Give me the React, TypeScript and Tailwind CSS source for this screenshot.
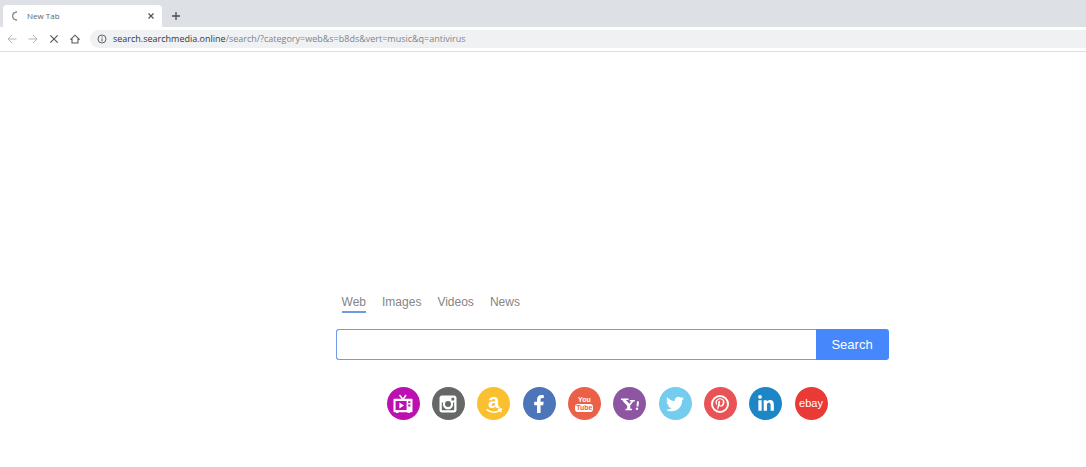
import type { ReactNode } from "react";
import { FaFacebookF, FaLinkedinIn, FaPinterestP, FaTwitter } from "react-icons/fa";

const tabs = ["Web", "Images", "Videos", "News"];

function TvIcon() {
  return <svg viewBox="0 0 20 20" className="size-5" fill="none" stroke="currentColor">
    <path d="M6.500 1 10 5.500 13 1" strokeWidth="1.500" />
    <path fill="currentColor" stroke="none" fillRule="evenodd" d="M1.500 4.800h17c.6 0 1 .4 1 1v11.400c0 .6-.4 1-1 1H17V19h-2.500v-.8h-9V19H3v-.8H1.500c-.6 0-1-.4-1-1V5.800c0-.6.4-1 1-1zM2.600 7v9h11V7zM15.200 7.200v1.800h2.200V7.200zM15.200 10.600v1.800h2.200v-1.800z" />
    <path d="m6.400 8.600 4.600 2.900-4.600 2.900z" fill="currentColor" stroke="none" />
  </svg>;
}

function InstagramIcon() {
  return <svg viewBox="0 0 20 20" className="size-5">
    <path fill="currentColor" fillRule="evenodd" d="M4 1.500h12c1.500 0 2.500 1 2.500 2.500v12c0 1.500-1 2.500-2.500 2.500H4c-1.500 0-2.500-1-2.500-2.500V4c0-1.500 1-2.500 2.500-2.500zM3.800 8.600v6.600c0 .7.400 1.100 1.100 1.100h10.200c.7 0 1.100-.4 1.100-1.100V8.600h-1.300a5.200 5.200 0 1 1-9.800 0zM13.500 3.800v2.700h2.700V3.800z" />
    <circle cx="10" cy="10" r="3" fill="#666867" />
  </svg>;
}

function YahooIcon() {
  return <svg viewBox="0 0 20 16" className="h-4 w-5" fill="none" stroke="currentColor">
    <path d="M1 3.300h7.500M9.800 4.800h5M5.500 13.400h6.500" strokeWidth="1.500" />
    <path d="m3.400 3.500 5.300 5.700v4" strokeWidth="3" />
    <path d="m12.800 5-3.500 4.200" strokeWidth="1.700" />
    <path d="m18 5.300-.5 5" strokeWidth="2" />
    <circle cx="17" cy="12.800" r="1.200" fill="currentColor" stroke="none" />
  </svg>;
}

function AmazonIcon() {
  return <span className="flex flex-col items-center font-['Liberation_Sans',sans-serif] text-[20px] font-bold leading-[14px]">
    <span>a</span>
    <svg viewBox="0 0 18 6" className="h-[6px] w-[18px]" fill="none" stroke="currentColor" strokeWidth="1.600">
      <path d="M1.500 1.300c4.500 3.600 9.500 3.600 13.500.8M13 1.300l3.200-.2-.8 3" />
    </svg>
  </span>;
}

function YoutubeIcon() {
  return <span className="flex flex-col items-center font-['Liberation_Sans_Narrow','Liberation_Sans',sans-serif] text-[7px] font-bold leading-[8px]">
    <span>You</span>
    <span className="rounded-[3px] bg-white px-px text-[#e9604a]">Tube</span>
  </span>;
}

function PinterestIcon() {
  return <span className="flex size-[18px] items-center justify-center rounded-full border-2 border-white">
    <FaPinterestP className="size-3" />
  </span>;
}

const sites: { name: string; color: string; icon: ReactNode }[] = [
  { name: "TV", color: "bg-[#bd10b0]", icon: <TvIcon /> },
  { name: "Instagram", color: "bg-[#666867]", icon: <InstagramIcon /> },
  { name: "Amazon", color: "bg-[#fbc02f]", icon: <AmazonIcon /> },
  { name: "Facebook", color: "bg-[#4c75ba]", icon: <FaFacebookF className="size-[18px]" /> },
  { name: "YouTube", color: "bg-[#ea6148]", icon: <YoutubeIcon /> },
  { name: "Yahoo", color: "bg-[#8e55a2]", icon: <YahooIcon /> },
  { name: "Twitter", color: "bg-[#74ccef]", icon: <FaTwitter className="size-[18px]" /> },
  { name: "Pinterest", color: "bg-[#e95356]", icon: <PinterestIcon /> },
  { name: "LinkedIn", color: "bg-[#1c86c7]", icon: <FaLinkedinIn className="size-[18px]" /> },
  { name: "eBay", color: "bg-[#e93a38]", icon: <span className="font-['Liberation_Sans',sans-serif] text-[11px] leading-none">ebay</span> },
];

function BrowserBar() {
  return <header className="font-['Open_Sans','Noto_Sans',sans-serif]">
    {/* tab strip */}
    <div className="flex h-[27px] items-end bg-[#dde0e5] pl-[3px]">
      <div className="flex h-[22px] w-[159px] items-center rounded-t-[4px] bg-white pl-2 pr-[7px] text-[#5f6368]">
        <svg viewBox="0 0 10 10" className="size-2.5" fill="none" stroke="#85898e" strokeWidth="1.3"><path d="M6 1C.2 1.400.2 8.600 6 9" /></svg>
        <span className="ml-1.5 flex-1 text-[8px]">New Tab</span>
        <button type="button" aria-label="Close tab">
          <svg viewBox="0 0 8 8" className="size-2" fill="none" stroke="#4a4d51" strokeWidth="1.1"><path d="m1.500 1.500 5 5M6.500 1.500l-5 5" /></svg>
        </button>
      </div>
      <button type="button" aria-label="New tab" className="flex h-[22px] items-center pl-[9px]">
        <svg viewBox="0 0 10 10" className="size-2.5" fill="none" stroke="#4a4d51" strokeWidth="1.3"><path d="M5 1v8M1 5h8" /></svg>
      </button>
    </div>

    {/* toolbar */}
    <div className="flex h-[25px] items-center border-b border-[#dcdee0] bg-white pl-[7px]">
      <div className="flex gap-[11px]">
        <button type="button" aria-label="Back">
          <svg viewBox="0 0 10 10" className="size-2.5" fill="none" stroke="#b4b7ba"><path d="M9.500 5h-8M5 1 1 5l4 4" /></svg>
        </button>
        <button type="button" aria-label="Forward">
          <svg viewBox="0 0 10 10" className="size-2.5" fill="none" stroke="#b4b7ba"><path d="M.5 5h8M5 1l4 4-4 4" /></svg>
        </button>
        <button type="button" aria-label="Stop loading">
          <svg viewBox="0 0 10 10" className="size-2.5" fill="none" stroke="#55585c" strokeWidth="1.2"><path d="m1.300 1.300 7.400 7.400M8.700 1.300 1.300 8.700" /></svg>
        </button>
        <button type="button" aria-label="Home">
          <svg viewBox="0 0 10 10" className="size-2.5" fill="none" stroke="#55585c" strokeWidth="1.1"><path d="M.7 5.300 5 1.200l4.300 4.100H8V9H2V5.300z" /></svg>
        </button>
      </div>
      <div className="ml-2.5 flex h-[18px] flex-1 items-center rounded-l-full bg-[#eff1f3] pl-[7px]">
        <svg viewBox="0 0 10 10" className="size-2.5" fill="none" stroke="#606468">
          <circle cx="5" cy="5" r="4" />
          <path d="M5 4.500v2.800M5 2.600v1.100" />
        </svg>
        <span className="ml-1.5 whitespace-nowrap text-[9px] text-[#80858a]"><span className="text-[#37393c]">search.searchmedia.online</span>/search/?category=web&amp;s=b8ds&amp;vert=music&amp;q=antivirus</span>
      </div>
    </div>
  </header>;
}

export default function App() {
  return <div className="min-h-screen bg-white font-['Liberation_Sans',Arial,sans-serif]">
    <BrowserBar />
    <main className="ml-[30.9%] w-full max-w-[553px] pt-[242px]">
      <nav className="flex gap-4 pl-1.5 text-xs text-[#858585]" aria-label="Search type">
        {tabs.map((tab) => (
          <a key={tab} href="#" className={`border-b-2 pb-px ${tab === "Web" ? "border-[#6d9be6]" : "border-transparent"}`}>{tab}</a>
        ))}
      </nav>

      <form className="mt-4 flex h-[31px]" onSubmit={(e) => e.preventDefault()}>
        <input type="text" aria-label="Search the web" className="min-w-0 flex-1 rounded-l-[3px] border border-r-0 border-[#6f9bea] px-2 text-[13px] outline-none" />
        <button type="submit" className="w-[73px] rounded-r-[3px] bg-[#4687fb] text-[13px] text-white">Search</button>
      </form>

      {/* shortcuts */}
      <div className="ml-[51px] mt-[27px] flex w-[441px] justify-between">
        {sites.map(({ name, color, icon }) => (
          <a key={name} href="#" aria-label={name} className={`flex size-[33px] items-center justify-center rounded-full text-white ${color}`}>{icon}</a>
        ))}
      </div>
    </main>
  </div>;
}
